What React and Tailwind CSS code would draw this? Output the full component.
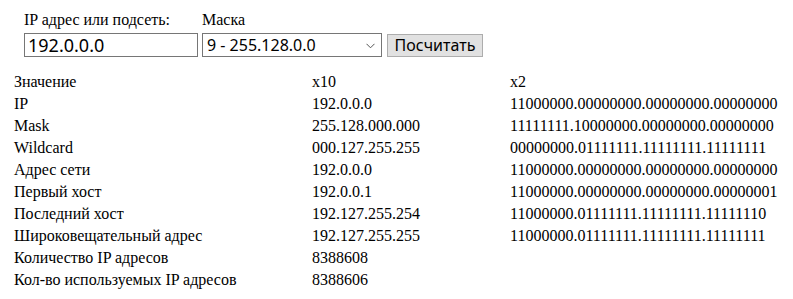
import React from "react";

const rows = [
  ["Значение", "x10", "x2"],
  ["IP", "192.0.0.0", "11000000.00000000.00000000.00000000"],
  ["Mask", "255.128.000.000", "11111111.10000000.00000000.00000000"],
  ["Wildcard", "000.127.255.255", "00000000.01111111.11111111.11111111"],
  ["Адрес сети", "192.0.0.0", "11000000.00000000.00000000.00000000"],
  ["Первый хост", "192.0.0.1", "11000000.00000000.00000000.00000001"],
  ["Последний хост", "192.127.255.254", "11000000.01111111.11111111.11111110"],
  ["Широковещательный адрес", "192.127.255.255", "11000000.01111111.11111111.11111111"],
  ["Количество IP адресов", "8388608", ""],
  ["Кол-во используемых IP адресов", "8388606", ""],
];

export default function App() {
  return (
    <div className="w-[793px] h-[299px] bg-white text-black overflow-hidden font-['Liberation_Serif',serif]">
      <div className="pl-[24px] pt-[10px]">
        <div className="flex text-[16px] leading-[20px]">
          <div className="w-[178px]">IP адрес или подсеть:</div>
          <div>Маска</div>
        </div>
        <div className="flex items-center mt-[3px]">
          <div className="w-[174px] h-[24px] border border-[#767676] flex items-center pl-[3px] text-[18px] font-['Noto_Sans',sans-serif] leading-none">
            192.0.0.0
          </div>
          <div className="ml-[4px] w-[180px] h-[24px] border border-[#767676] flex items-center justify-between pl-[4px] pr-[6px] text-[16px] font-['Noto_Sans',sans-serif] leading-none">
            <span>9 - 255.128.0.0</span>
            <svg width="9" height="6" viewBox="0 0 9 6" className="mt-[1px]">
              <path d="M0.5 0.8 L4.5 4.8 L8.5 0.8" fill="none" stroke="#555" strokeWidth="1" />
            </svg>
          </div>
          <div className="ml-[5px] w-[96px] h-[23px] border border-[#adadad] bg-[#e1e1e1] flex items-center justify-center text-[16px] font-['Noto_Sans',sans-serif] leading-none">
            Посчитать
          </div>
        </div>
      </div>
      <div className="mt-[14px] pl-[14px] text-[16px]">
        {rows.map((r, i) => (
          <div key={i} className="flex h-[22px] items-center leading-[22px]">
            <div className="w-[298px] whitespace-nowrap">{r[0]}</div>
            <div className="w-[198px] whitespace-nowrap">{r[1]}</div>
            <div className="whitespace-nowrap">{r[2]}</div>
          </div>
        ))}
      </div>
    </div>
  );
}
